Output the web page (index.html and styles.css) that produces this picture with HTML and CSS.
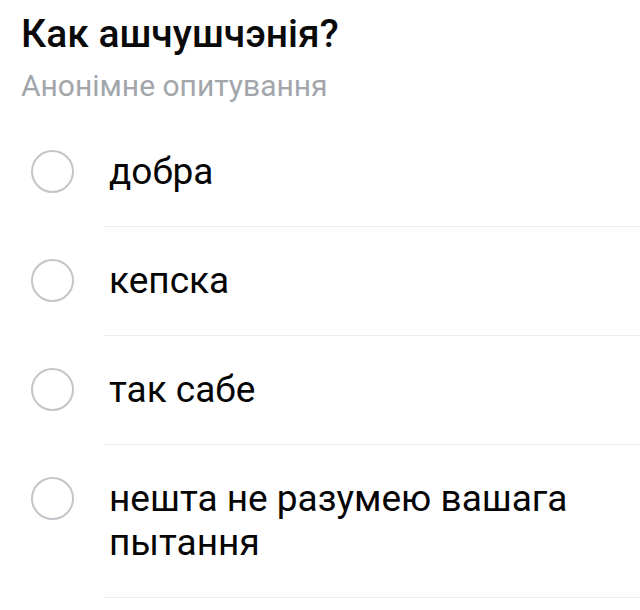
FILE: index.html
```html
<!DOCTYPE html>
<html lang="be">
<head>
<meta charset="utf-8">
<title>Апытанне</title>
<link rel="stylesheet" href="styles.css">
</head>
<body>
<div class="poll">
  <div class="poll-head">
    <h1 class="poll-title">Как ашчушчэнія?</h1>
    <div class="poll-sub">Анонімне опитування</div>
  </div>
  <ul class="options">
    <li class="option"><span class="radio"></span><div class="option-body">добра</div></li>
    <li class="option"><span class="radio"></span><div class="option-body">кепска</div></li>
    <li class="option"><span class="radio"></span><div class="option-body">так сабе</div></li>
    <li class="option"><span class="radio"></span><div class="option-body">нешта не разумею вашага пытання</div></li>
  </ul>
</div>
</body>
</html>
```
FILE: styles.css
```css
html, body {
  margin: 0;
  padding: 0;
  background: #ffffff;
}
body {
  font-family: Roboto, "Noto Sans", sans-serif;
  color: #000;
}
.poll {
  padding-left: 21px;
}
.poll-head {
  padding-top: 14px;
}
.poll-title {
  margin: 0;
  font-size: 39px;
  line-height: 40px;
  font-weight: 500;
  color: #0a0a0a;
}
.poll-sub {
  margin-top: 15px;
  font-size: 30px;
  line-height: 34px;
  color: #a2a6ab;
}
.options {
  list-style: none;
  margin: 15px 0 0;
  padding: 0;
}
.option {
  display: flex;
  align-items: flex-start;
}
.radio {
  flex: none;
  box-sizing: border-box;
  width: 43px;
  height: 43px;
  margin: 32px 30px 0 10px;
  border: 2.5px solid #c2c5c9;
  border-radius: 50%;
}
.option-body {
  flex: 1;
  padding: 32px 20px 32px 5px;
  font-size: 37px;
  line-height: 44px;
  color: #050505;
  border-bottom: 1px solid #eceef1;
}
```
